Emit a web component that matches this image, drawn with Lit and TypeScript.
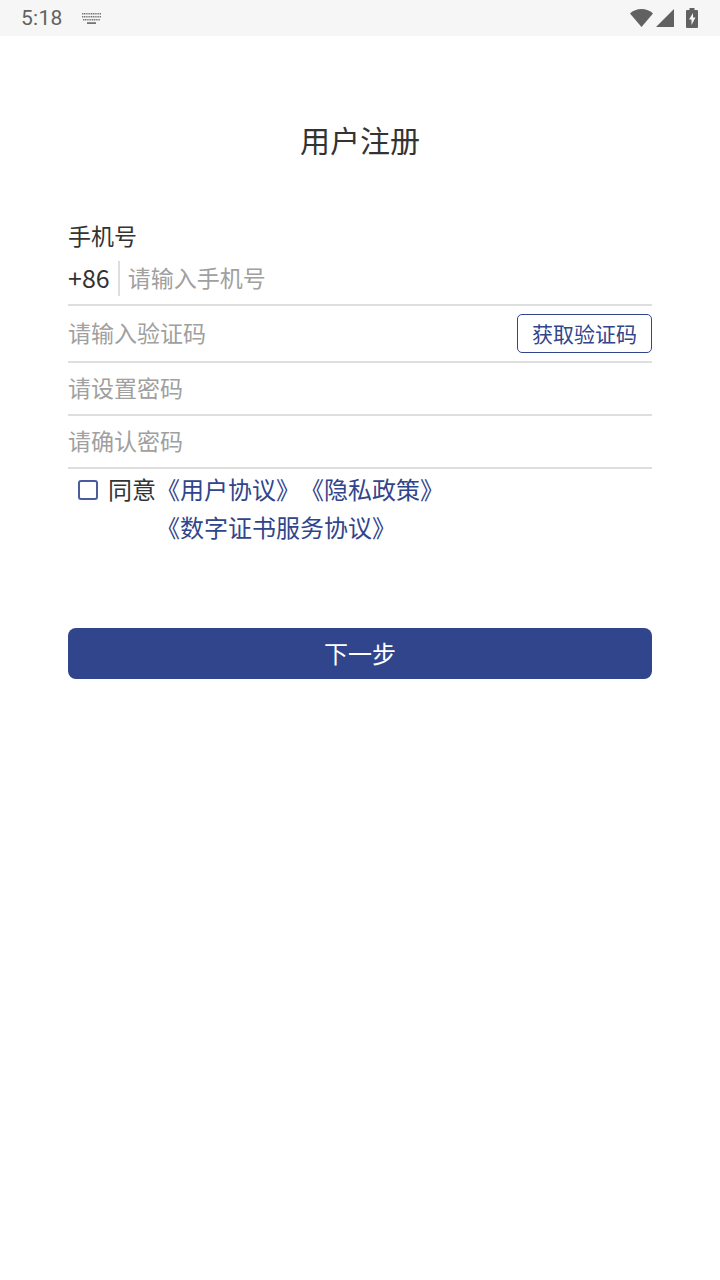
import { css, html, LitElement } from "lit";
import { customElement } from "lit/decorators.js";

@customElement("app-root")
export class AppRoot extends LitElement {
  render() {
    return html`
      <div class="status">
        <span class="time">5:18</span>
        <svg class="kbd" width="19" height="11" viewBox="0 0 19 11">
          <path stroke="#757575" stroke-width="1.500" stroke-dasharray="1.200 .6" fill="none" d="M0 .8h19M0 3.800h19M1 6.800h17" />
          <path fill="#757575" d="M5 9.200h9V11H5z" />
        </svg>
        <span class="grow"></span>
        <svg width="23" height="18" viewBox="0 0 23 18" fill="#616161">
          <path d="M0 4.500C3 1.700 7 0 11.500 0S20 1.700 23 4.500L11.500 18z" />
        </svg>
        <svg class="signal" width="18" height="18" viewBox="0 0 18 18" fill="#616161">
          <path d="M18 0v18H0z" />
        </svg>
        <svg class="battery" width="12" height="20" viewBox="0 0 12 20">
          <path fill="#616161" d="M3.500 0h5v2H11a1 1 0 0 1 1 1v16a1 1 0 0 1-1 1H1a1 1 0 0 1-1-1V3a1 1 0 0 1 1-1h2.500z" />
          <path fill="#f6f6f6" d="M7 5 3 11.500h2.500V17l4-7.500H7z" />
        </svg>
      </div>

      <div class="title">用户注册</div>

      <div class="form">
        <div class="label">手机号</div>
        <div class="row phone">
          <span class="code">+86</span>
          <span class="sep"></span>
          <span class="hint">请输入手机号</span>
        </div>
        <div class="row verify">
          <span class="hint">请输入验证码</span>
          <button class="send">获取验证码</button>
        </div>
        <div class="row"><span class="hint">请设置密码</span></div>
        <div class="row"><span class="hint">请确认密码</span></div>

        <div class="agree">
          <span class="check"></span>
          <span class="agree-text">同意</span>
          <div class="links">
            <div>《用户协议》《隐私政策》</div>
            <div>《数字证书服务协议》</div>
          </div>
        </div>

        <button class="next">下一步</button>
      </div>
    `;
  }

  static styles = css`
    :host {
      display: block;
      min-height: 1280px;
      background: #fff;
      font-family: "Noto Sans CJK SC", "Noto Sans", sans-serif;
      color: #333;
      text-spacing-trim: space-all;
    }

    .status {
      display: flex;
      align-items: center;
      height: 36px;
      padding: 0 22px 0 21px;
      box-sizing: border-box;
      background: #f6f6f6;
    }

    .time {
      font-family: Roboto, sans-serif;
      font-size: 21px;
      letter-spacing: 0.3px;
      color: #616161;
    }

    .kbd {
      margin-left: 19px;
    }

    .grow {
      flex: 1;
    }

    .signal {
      margin-left: 3px;
    }

    .battery {
      margin-left: 12px;
    }

    .title {
      margin-top: 82px;
      padding-bottom: 3px;
      font-size: 30px;
      line-height: 42px;
      text-align: center;
    }

    .form {
      display: flex;
      flex-direction: column;
      margin-top: 56px;
      padding: 0 68px;
    }

    .label {
      padding-bottom: 2px;
      font-size: 23px;
      line-height: 32px;
    }

    .row {
      display: flex;
      align-items: center;
      height: 53px;
      padding-bottom: 4px;
      box-sizing: border-box;
      border-bottom: 2px solid #dedede;
    }

    .verify {
      justify-content: space-between;
      height: 57px;
      padding-bottom: 0;
    }

    .verify .hint {
      padding-bottom: 4px;
    }

    .code {
      font-size: 25px;
    }

    .sep {
      width: 2px;
      height: 35px;
      margin: 4px 8px 0 8px;
      background: #dedede;
    }

    .hint {
      font-size: 23px;
      color: #a0a0a0;
    }

    .send {
      width: 135px;
      height: 39px;
      padding: 0 0 2px;
      border: 1px solid #31458c;
      border-radius: 5px;
      background: #fff;
      color: #31458c;
      font: inherit;
      font-size: 21px;
    }

    .agree {
      display: flex;
      align-items: flex-start;
      padding: 1px 0 1px 10px;
      font-size: 24px;
      line-height: 38px;
    }

    .check {
      width: 20px;
      height: 20px;
      margin: 10px 10px 0 0;
      box-sizing: border-box;
      border: 2px solid #4a5c9b;
      border-radius: 3px;
    }

    .links {
      color: #31458c;
    }

    .next {
      height: 51px;
      margin-top: 81px;
      padding: 0 0 2px;
      border: 0;
      border-radius: 8px;
      background: #31458c;
      color: #fff;
      font: inherit;
      font-size: 24px;
    }
  `;
}
